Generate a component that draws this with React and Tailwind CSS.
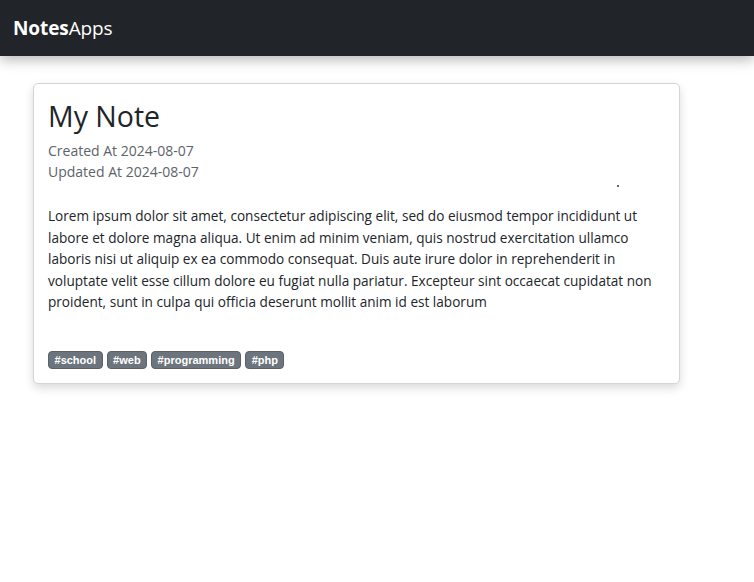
const tags = ["school", "web", "programming", "php"]

const body =
  "Lorem ipsum dolor sit amet, consectetur adipiscing elit, sed do eiusmod tempor incididunt ut labore et dolore magna aliqua. Ut enim ad minim veniam, quis nostrud exercitation ullamco laboris nisi ut aliquip ex ea commodo consequat. Duis aute irure dolor in reprehenderit in voluptate velit esse cillum dolore eu fugiat nulla pariatur. Excepteur sint occaecat cupidatat non proident, sunt in culpa qui officia deserunt mollit anim id est laborum"

function Navbar() {
  return (
    <nav className="h-[56px] bg-[#212529] flex items-center px-[13px] shadow-[0_4px_12px_rgba(0,0,0,0.28)] relative z-10">
      <span className="text-white text-[19px] tracking-[-0.1px]">
        <b className="font-bold">Notes</b>Apps
      </span>
    </nav>
  )
}

function NoteCard() {
  return (
    <div className="w-[647px] border border-[#d4d4d4] rounded-[5px] bg-white shadow-[0_4px_10px_rgba(0,0,0,0.15)] px-[14px] pt-[14px] pb-[14px]">
      <h1 className="text-[28.5px] leading-[36px] text-[#212529] font-normal">My Note</h1>
      <div className="mt-[6px] text-[14px] leading-[21px] text-[#5c636a]">
        <p>Created At 2024-08-07</p>
        <p>Updated At 2024-08-07</p>
      </div>
      <div className="h-[23px] relative">
        <span className="absolute left-[569px] top-[3px] w-[2px] h-[2px] bg-[#333] rounded-full" />
      </div>
      <p className="text-[13.6px] leading-[21.6px] text-[#212529] pr-[2px]">{body}</p>
      <div className="mt-[38px] flex gap-[4px]">
        {tags.map((t) => (
          <span
            key={t}
            className="h-[18px] px-[5.5px] rounded-[4px] bg-[#6c757d] border border-[#5a6167] text-white text-[11px] font-bold flex items-center font-['Liberation_Sans',sans-serif]"
          >
            #{t}
          </span>
        ))}
      </div>
    </div>
  )
}

export default function App() {
  return (
    <div className="min-h-[582px] bg-white font-['Open_Sans',sans-serif]">
      <Navbar />
      <div className="pl-[33px] pt-[27px]">
        <NoteCard />
      </div>
    </div>
  )
}
